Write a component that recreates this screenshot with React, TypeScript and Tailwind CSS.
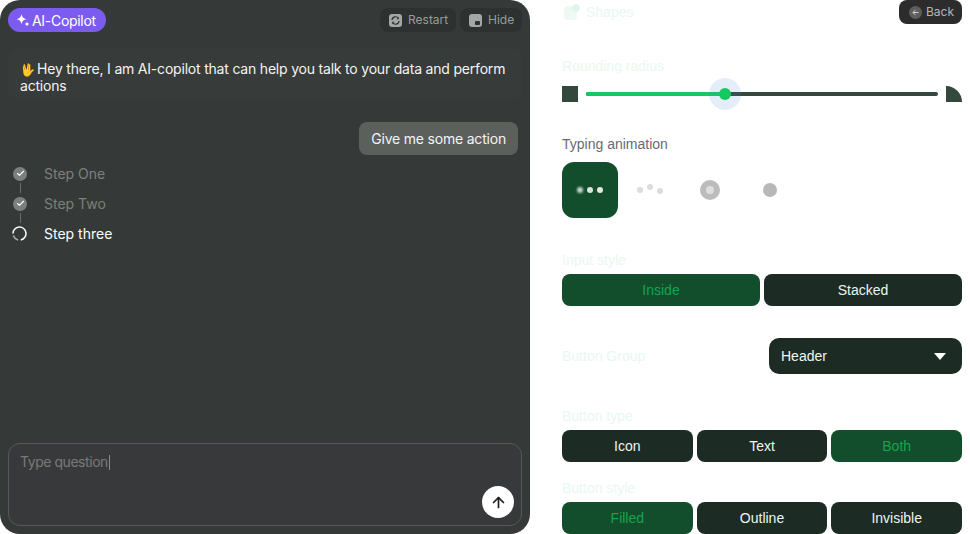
import { ArrowUp, Check } from "lucide-react";

function Seg({ label, active }: { label: string; active?: boolean }) {
  return (
    <div
      className={
        active
          ? "flex h-8 flex-1 items-center justify-center rounded-lg bg-[#134e2c] text-[14px] text-[#17a34f]"
          : "flex h-8 flex-1 items-center justify-center rounded-lg bg-[#1c2b24] text-[14px] text-[#eef5f1]"
      }
    >
      {label}
    </div>
  );
}

function Label({ children }: { children: React.ReactNode }) {
  return <div className="text-[14px] leading-[20px] text-[#e9f8f0]">{children}</div>;
}

function Step({ label, done }: { label: string; done: boolean }) {
  return (
    <div className="flex h-5 items-center gap-[17px] pl-[5px]">
      {done ? (
        <div className="mt-px flex h-[14px] w-[14px] items-center justify-center rounded-full bg-[#7c7f7d]">
          <Check size={9} strokeWidth={3} className="text-white" />
        </div>
      ) : (
        <svg width="15" height="15" viewBox="0 0 15 15" className="-ml-px mt-px">
          <path d="M6.2 13.9 A6.5 6.5 0 0 1 1.3 9.6" fill="none" stroke="#a6a8a7" strokeWidth="1.5" />
          <path d="M1 7.5 A6.5 6.5 0 1 1 8.8 13.9" fill="none" stroke="#ffffff" strokeWidth="1.5" />
        </svg>
      )}
      <span className={done ? "text-[14px] text-[#7d807e]" : "text-[14px] text-white"}>{label}</span>
    </div>
  );
}

export default function App() {
  return (
    <div className="flex h-[534px] w-[970px] overflow-hidden bg-white font-['Inter',sans-serif]">
      <div className="flex h-[534px] w-[530px] flex-col rounded-[20px] bg-[#353a38] px-2 pb-2 pt-2">
        <div className="flex h-6 items-center justify-between">
          <div className="flex h-6 items-center gap-[2px] rounded-full bg-[#7c5cf0] pl-[8px] pr-[10px] text-[14px] tracking-[-0.3px] text-white">
            <svg width="14" height="14" viewBox="0 0 14 14" fill="#fff">
              <path d="M5.5 1 C6 4.2 7.3 5.6 10.5 6.2 C7.3 6.8 6 8.2 5.5 11.4 C5 8.2 3.7 6.8 0.5 6.2 C3.7 5.6 5 4.2 5.5 1 Z" />
              <circle cx="11" cy="11" r="1.6" />
            </svg>
            AI-Copilot
          </div>
          <div className="flex gap-1">
            <div className="flex h-6 w-[76px] items-center gap-[6px] rounded-lg bg-[#2d3130] pl-[9px] text-[12px] text-[#9a9c9b]">
              <svg width="13" height="13" viewBox="0 0 13 13">
                <rect width="13" height="13" rx="3" fill="#a5a7a6" />
                <path d="M3 6 A3.5 3.5 0 0 1 9.5 4.5 M10 7 A3.5 3.5 0 0 1 3.5 8.5" fill="none" stroke="#2d3130" strokeWidth="1.2" />
                <path d="M9.8 3 L9.8 5.2 L7.6 5.2 Z M3.2 10 L3.2 7.8 L5.4 7.8 Z" fill="#2d3130" />
              </svg>
              Restart
            </div>
            <div className="flex h-6 w-[62px] items-center gap-[6px] rounded-lg bg-[#2d3130] pl-[9px] text-[12px] text-[#9a9c9b]">
              <svg width="13" height="13" viewBox="0 0 13 13">
                <rect width="13" height="13" rx="3" fill="#a5a7a6" />
                <rect x="6" y="7" width="5" height="4" rx="1" fill="#2d3130" />
              </svg>
              Hide
            </div>
          </div>
        </div>

        <div className="mt-[16px] rounded-lg bg-[#373b3a] px-3 pb-[5px] pt-[12px] text-[14px] leading-[17px] tracking-[-0.2px] text-[#f3f4f3]">
          <span className="mr-[2px] text-[12px] leading-none tracking-normal">🖖</span>Hey there, I am AI-copilot that can help you talk to your data and perform actions
        </div>

        <div className="mt-[23px] flex justify-end pr-1">
          <div className="flex h-[33px] items-center rounded-lg bg-[#5b605d] px-3 text-[14px] tracking-[-0.2px] text-[#f3f4f3]">
            Give me some action
          </div>
        </div>

        <div className="mt-[8px] flex flex-col">
          <Step label="Step One" done />
          <div className="ml-[12px] h-[10px] w-px bg-[#6b6e6c]" />
          <Step label="Step Two" done />
          <div className="ml-[12px] h-[10px] w-px bg-[#6b6e6c]" />
          <Step label="Step three" done={false} />
        </div>

        <div className="mt-auto flex h-[83px] flex-col rounded-xl border border-[#565958] bg-[#38393a] pb-[7px] pl-[11px] pr-[7px] pt-[9px]">
          <div className="flex items-center text-[14px] leading-[18px] tracking-[-0.45px] text-[#78797a]">
            Type question<span className="ml-px h-[15px] w-px bg-[#8a8b8b]" />
          </div>
          <div className="mt-auto flex justify-end">
            <div className="flex h-8 w-8 items-center justify-center rounded-full bg-white text-[#1d1f1e]">
              <ArrowUp size={17} strokeWidth={2.4} />
            </div>
          </div>
        </div>
      </div>

      <div className="ml-8 flex w-[400px] flex-col font-['Liberation_Sans',sans-serif]">
        <div className="flex h-6 items-center justify-between">
          <div className="flex items-center gap-[6px] pl-[2px]">
            <svg width="16" height="16" viewBox="0 0 16 16">
              <rect x="0" y="2" width="13" height="14" rx="4" fill="#eef9f3" />
              <circle cx="12" cy="4" r="3.8" fill="#e0f5ea" />
            </svg>
            <span className="text-[14px] text-[#e9f8f0]">Shapes</span>
          </div>
          <div className="flex h-6 w-[63px] items-center gap-[4px] rounded-lg bg-[#2c2c2c] pl-[10px] font-['Inter',sans-serif] text-[12px] text-[#b5b5b5]">
            <span className="flex h-[13px] w-[13px] items-center justify-center rounded-full bg-[#5e5e5e]">
              <svg width="7" height="7" viewBox="0 0 7 7">
                <path d="M6.5 3.5 H1 M3.3 1 L1 3.5 L3.3 6" fill="none" stroke="#cfcfcf" strokeWidth="1" />
              </svg>
            </span>
            <span>Back</span>
          </div>
        </div>

        <div className="mt-[32px]"><Label>Rounding radius</Label></div>
        <div className="mt-[10px] flex h-4 items-center">
          <div className="h-4 w-4 bg-[#34483d]" />
          <div className="relative mx-2 flex h-1 flex-1 rounded-full bg-[#34483d]">
            <div className="h-1 w-[139px] rounded-full bg-[#16c862]" />
            <div className="absolute left-[123px] top-[-14px] h-8 w-8 rounded-full bg-[#4a8bd0]/15" />
            <div className="absolute left-[133px] top-[-4px] h-3 w-3 rounded-full bg-[#16c862]" />
          </div>
          <div className="h-4 w-4 rounded-tr-[16px] bg-[#34483d]" />
        </div>

        <div className="mt-[32px] text-[14px] leading-[20px] text-[#6a6a74]">Typing animation</div>
        <div className="mt-2 flex gap-1">
          <div className="flex h-14 w-14 items-center justify-center gap-[4px] rounded-xl bg-[#134e2c]">
            <span className="h-[6px] w-[6px] rounded-full bg-[#c9d6ce] blur-[1px]" />
            <span className="h-[6px] w-[6px] rounded-full bg-[#dbe3de]" />
            <span className="h-[6px] w-[6px] rounded-full bg-[#e3e9e5]" />
          </div>
          <div className="flex h-14 w-14 items-center justify-center gap-[4px]">
            <span className="mt-[-1px] h-[6px] w-[6px] rounded-full bg-[#dcdcdc]" />
            <span className="mt-[-7px] h-[6px] w-[6px] rounded-full bg-[#dcdcdc]" />
            <span className="mt-[2px] h-[6px] w-[6px] rounded-full bg-[#dcdcdc]" />
          </div>
          <div className="flex h-14 w-14 items-center justify-center">
            <div className="flex h-5 w-5 items-center justify-center rounded-full bg-[#bcbcbc]">
              <span className="h-2 w-2 rounded-full bg-[#dedede]" />
            </div>
          </div>
          <div className="flex h-14 w-14 items-center justify-center">
            <div className="h-[14px] w-[14px] rounded-full bg-[#b8b8b8]" />
          </div>
        </div>

        <div className="mt-[32px]"><Label>Input style</Label></div>
        <div className="mt-[4px] flex gap-1">
          <Seg label="Inside" active />
          <Seg label="Stacked" />
        </div>

        <div className="mt-[32px] flex items-center justify-between">
          <Label>Button Group</Label>
          <div className="flex h-9 w-[193px] items-center justify-between rounded-[10px] bg-[#1c2b24] pl-3 pr-[16px] text-[14px] text-[#f1f6f3]">
            Header
            <svg width="12" height="7" viewBox="0 0 12 7"><path d="M0 0 H12 L6 7 Z" fill="#ffffff" /></svg>
          </div>
        </div>

        <div className="mt-[32px]"><Label>Button type</Label></div>
        <div className="mt-[4px] flex gap-1">
          <Seg label="Icon" />
          <Seg label="Text" />
          <Seg label="Both" active />
        </div>

        <div className="mt-[16px]"><Label>Button style</Label></div>
        <div className="mt-[4px] flex gap-1">
          <Seg label="Filled" active />
          <Seg label="Outline" />
          <Seg label="Invisible" />
        </div>
      </div>
    </div>
  );
}
